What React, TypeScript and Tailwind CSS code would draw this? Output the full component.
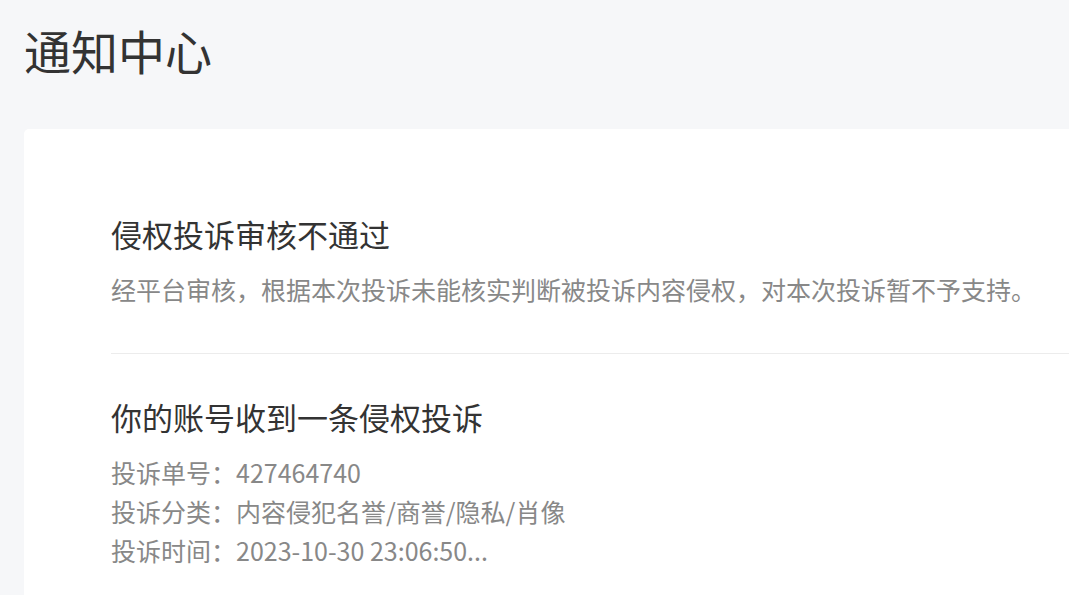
const notices = [
  {
    id: 1,
    title: "侵权投诉审核不通过",
    lines: ["经平台审核，根据本次投诉未能核实判断被投诉内容侵权，对本次投诉暂不予支持。"],
  },
  {
    id: 2,
    title: "你的账号收到一条侵权投诉",
    lines: [
      "投诉单号：427464740",
      "投诉分类：内容侵犯名誉/商誉/隐私/肖像",
      "投诉时间：2023-10-30 23:06:50...",
    ],
  },
];

export default function App() {
  return (
    <div
      className="min-h-[595px] w-[1069px] overflow-hidden bg-[#f6f7f9] pl-6"
      style={{ fontFamily: '"Noto Sans CJK SC", "Noto Sans", sans-serif' }}
    >
      <h1 className="pt-[20px] text-[47px] leading-[60px] text-[#333]">通知中心</h1>

      <div className="mt-[49px] w-[1100px] rounded-l-[5px] bg-white pl-[87px] pt-[85px]">
        {notices.map((n, i) => (
          <div
            key={n.id}
            className={i === 0 ? "border-b border-[#ececec] pb-[44px]" : "pt-[43px] pb-8"}
          >
            <div className="text-[31px] leading-[40px] text-[#333]">{n.title}</div>
            <div className="mt-4 text-[25px] leading-[39px] text-[#888]">
              {n.lines.map((line) => (
                <div key={line}>{line}</div>
              ))}
            </div>
          </div>
        ))}
      </div>
    </div>
  );
}
